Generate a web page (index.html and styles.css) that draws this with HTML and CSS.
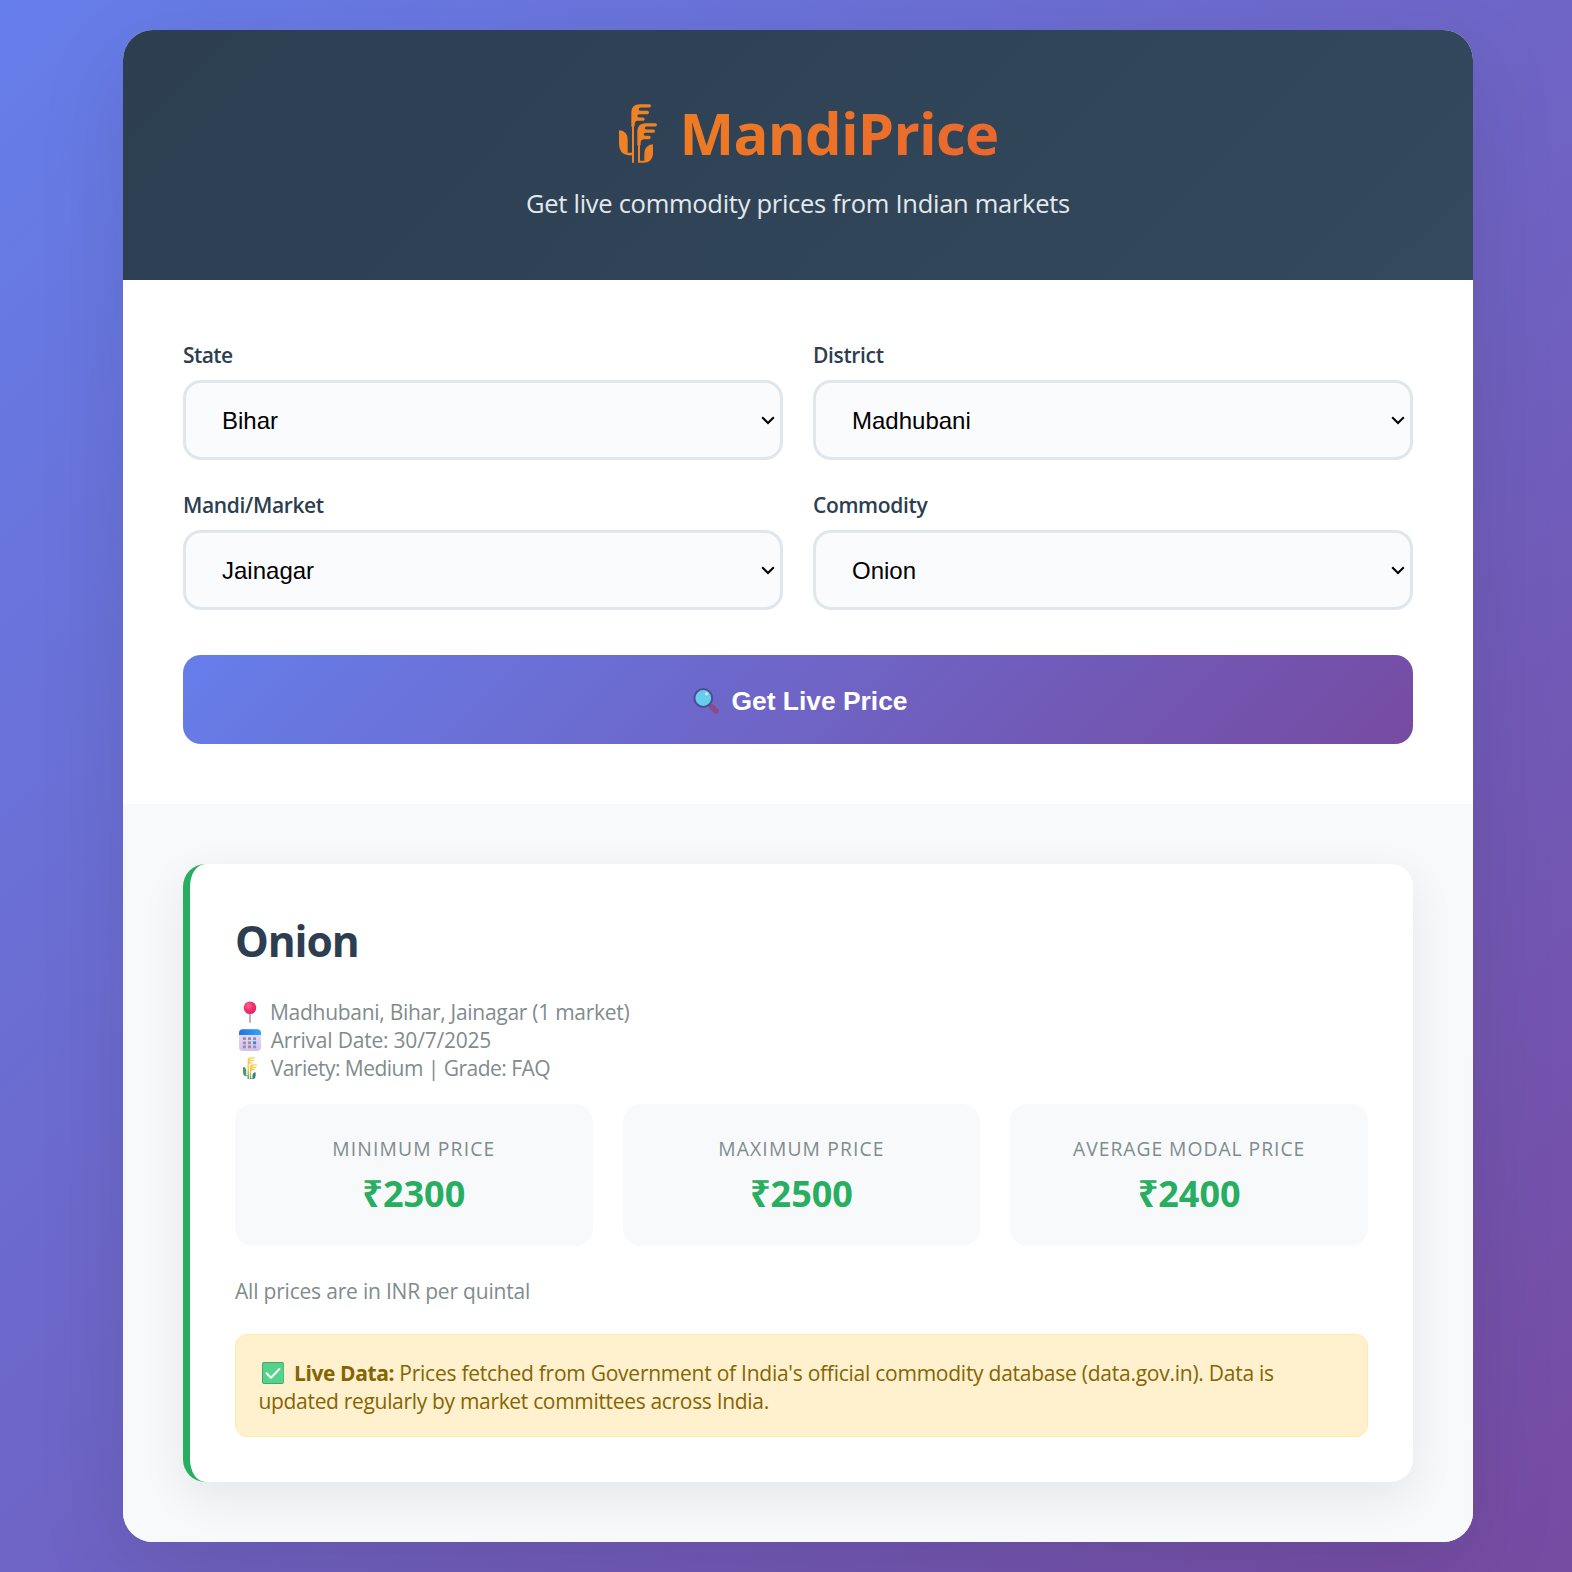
FILE: index.html
```html
<!DOCTYPE html>
<html lang="en">
<head>
<meta charset="utf-8">
<title>MandiPrice</title>
<link rel="stylesheet" href="styles.css">
</head>
<body>
<main class="container">
  <header class="header">
    <h1 class="title">
      <svg class="title-icon" viewBox="57 42 114 176">
        <defs><linearGradient id="orange" gradientUnits="userSpaceOnUse" x1="57" y1="42" x2="171" y2="218"><stop offset="0" stop-color="#f08523"/><stop offset="1" stop-color="#ef7e26"/></linearGradient></defs>
        <g fill="url(#orange)">
          <path d="M94 110V67Q94 42 120 42H148Q153 42 153 47Q153 52 148 52H122Q116 52 116 57Q116 62 122 62H142Q147 62 147 67Q147 72 142 72H118Q112 72 112 77Q112 82 118 82H129Q134 82 134 87Q134 92 129 92H112Q105 93 104 100V108H102V218H96V195H85Q57 193 57 160V120Q83 122 83 148V188H96V110Z"/>
          <path d="M112 165V124Q112 99 138 99H166Q171 99 171 104Q171 109 166 109H140Q134 109 134 114Q134 118 140 118H160Q165 118 165 123Q165 128 160 128H136Q131 128 131 133Q131 137 136 137H147Q152 137 152 142Q152 147 147 147H131Q122 149 122 156V165H120V212H133V190Q134 164 159 162V190Q158 216 133 218H114V165Z"/>
        </g>
      </svg>
      <span>MandiPrice</span>
    </h1>
    <p class="subtitle">Get live commodity prices from Indian markets</p>
  </header>

  <form class="search">
    <div class="fields">
      <div class="field">
        <label class="label label-short" for="state">State</label>
        <div class="select"><select id="state"><option>Bihar</option></select><svg viewBox="0 0 14 9"><path d="M1.2 1.2 7 7 12.8 1.2"/></svg></div>
      </div>
      <div class="field">
        <label class="label" for="district">District</label>
        <div class="select"><select id="district"><option>Madhubani</option></select><svg viewBox="0 0 14 9"><path d="M1.2 1.2 7 7 12.8 1.2"/></svg></div>
      </div>
      <div class="field">
        <label class="label" for="market">Mandi/Market</label>
        <div class="select"><select id="market"><option>Jainagar</option></select><svg viewBox="0 0 14 9"><path d="M1.2 1.2 7 7 12.8 1.2"/></svg></div>
      </div>
      <div class="field">
        <label class="label" for="commodity">Commodity</label>
        <div class="select"><select id="commodity"><option>Onion</option></select><svg viewBox="0 0 14 9"><path d="M1.2 1.2 7 7 12.8 1.2"/></svg></div>
      </div>
    </div>
    <button class="submit" type="button">
      <svg class="lens" viewBox="0 0 26 26">
        <path d="M15.5 15.5 19 19" stroke="#4f4a86" stroke-width="3"/>
        <path d="M19 19 23 23" stroke="#8d4a86" stroke-width="5.6" stroke-linecap="round"/>
        <circle cx="10.3" cy="10" r="8.9" fill="#66cdea" stroke="#4d4d8f" stroke-width="2"/>
        <circle cx="13.7" cy="5.8" r="1.6" fill="#c4ecf8"/>
      </svg>
      <span>Get Live Price</span>
    </button>
  </form>

  <section class="results">
    <article class="card">
      <h2 class="name">Onion</h2>
      <div class="info">
        <div class="row row-place">
          <svg class="icon" viewBox="0 0 24 28">
            <defs><radialGradient id="pin" cx=".38" cy=".35" r=".7"><stop offset="0" stop-color="#ff6a90"/><stop offset=".5" stop-color="#f2336a"/><stop offset="1" stop-color="#d92467"/></radialGradient></defs>
            <path d="M12 14V24.8" stroke="#a795ac" stroke-width="1.5"/><circle cx="12" cy="9.7" r="6.3" fill="url(#pin)"/>
          </svg>
          <span>Madhubani, Bihar, Jainagar (1 market)</span>
        </div>
        <div class="row row-date">
          <svg class="icon" viewBox="0 0 24 28">
            <defs><linearGradient id="sheet" x1="0" y1="0" x2="0" y2="1"><stop offset="0" stop-color="#e9e2f6"/><stop offset="1" stop-color="#d6c0ea"/></linearGradient><linearGradient id="band"><stop offset="0" stop-color="#1b76e0"/><stop offset="1" stop-color="#31a4fb"/></linearGradient></defs>
            <rect x="1" y="3.2" width="22" height="21.8" rx="4" fill="url(#sheet)"/>
            <path d="M1 9V7.2a4 4 0 0 1 4-4H19a4 4 0 0 1 4 4V9Z" fill="url(#band)"/>
            <path d="M4.9 12.7h3M10 12.7h3M15.1 12.7h3M4.9 16.8h3M10 16.8h3M4.9 20.8h3M10 20.8h3M15.1 20.8h3" stroke="#998da8" stroke-width="2.7"/>
            <path d="M15.1 16.8h3" stroke="#1d8df2" stroke-width="2.9"/>
          </svg>
          <span>Arrival Date: 30/7/2025</span>
        </div>
        <div class="row row-variety">
          <svg class="icon" viewBox="0 0 24 28">
            <defs><linearGradient id="stalk" x1="0" y1="0" x2="0" y2="1"><stop offset="0" stop-color="#ffd24a"/><stop offset=".55" stop-color="#f7bd45"/><stop offset=".75" stop-color="#8fb266"/><stop offset="1" stop-color="#3f8a6b"/></linearGradient></defs>
            <g transform="translate(5 3.3) scale(.124) translate(-57 -42)">
              <path fill="#4c9a63" d="M57 120Q83 122 83 148V188H102V195H85Q57 193 57 160Z"/>
              <path fill="#3b8376" d="M159 162Q134 164 133 190V212H114V218H133Q158 216 159 190Z"/>
              <path fill="url(#stalk)" d="M94 110V67Q94 42 120 42H148Q153 42 153 47Q153 52 148 52H122Q116 52 116 57Q116 62 122 62H142Q147 62 147 67Q147 72 142 72H118Q112 72 112 77Q112 82 118 82H129Q134 82 134 87Q134 92 129 92H112Q105 93 104 100V218H94Z"/>
              <path fill="url(#stalk)" d="M112 165V124Q112 99 138 99H166Q171 99 171 104Q171 109 166 109H140Q134 109 134 114Q134 118 140 118H160Q165 118 165 123Q165 128 160 128H136Q131 128 131 133Q131 137 136 137H147Q152 137 152 142Q152 147 147 147H131Q122 149 122 156V218H112Z"/>
            </g>
          </svg>
          <span>Variety: Medium | Grade: FAQ</span>
        </div>
      </div>

      <div class="prices">
        <div class="price"><div class="price-label">Minimum Price</div><div class="price-value">₹2300</div></div>
        <div class="price"><div class="price-label">Maximum Price</div><div class="price-value">₹2500</div></div>
        <div class="price"><div class="price-label price-label-long">Average Modal Price</div><div class="price-value">₹2400</div></div>
      </div>

      <p class="unit">All prices are in INR per quintal</p>

      <div class="notice"><svg class="check" viewBox="0 0 22 22"><rect width="22" height="22" rx="2" fill="#3fa579"/><rect x="1" y="1" width="20.5" height="20" rx="1.5" fill="#55d38a"/><path d="M4.6 11.3 9 15.7 17.4 7" fill="none" stroke="#fff" stroke-width="2" stroke-linecap="round" stroke-linejoin="round"/></svg><strong>Live Data:</strong> Prices fetched from Government of India's official commodity database (data.gov.in). Data is <span class="notice-end">updated regularly by market committees across India.</span></div>
    </article>
  </section>
</main>
</body>
</html>
```
FILE: styles.css
```css
* { box-sizing: border-box; margin: 0; padding: 0; }

body {
  min-height: 1572px;
  padding: 30px 99px 30px 123px;
  background: linear-gradient(135deg, #667eea 0%, #764ba2 100%);
  font-family: "Open Sans", "Noto Sans", sans-serif;
}

.container {
  width: 1350px;
  background: #fff;
  border-radius: 30px;
  overflow: hidden;
  box-shadow: 0 30px 90px rgba(0, 0, 0, .1);
}

.header {
  height: 250px;
  padding: 60px;
  background: linear-gradient(135deg, #2c3e50, #34495e);
  text-align: center;
}

.title {
  display: flex;
  justify-content: center;
  align-items: center;
  height: 85px;
  font-size: 58px;
  font-weight: 700;
  line-height: 87px;
  letter-spacing: -.8px;
  color: transparent;
  background: linear-gradient(135deg, #f39c12, #e74c3c);
  background-clip: text;
  -webkit-background-clip: text;
}
.title-icon { width: 38px; height: 59px; margin: 1px 23px 0 21px; }

.subtitle {
  margin-top: 10px;
  font-size: 25.5px;
  line-height: 36px;
  letter-spacing: -.28px;
  color: #e4e8eb;
}

.search { padding: 60px; }
.fields { display: grid; grid-template-columns: 1fr 1fr; gap: 30px; }
.field { display: flex; flex-direction: column; gap: 10px; }
.label {
  font-size: 21px;
  font-weight: 600;
  line-height: 30px;
  letter-spacing: -.35px;
  color: #2c3e50;
}
.label-short { letter-spacing: -.6px; }

.select { display: grid; align-items: center; height: 80px; }
.select select,
.select svg { grid-area: 1 / 1; }
.select select {
  height: 80px;
  padding: 0 30px 0 36px;
  appearance: none;
  border: 3px solid #dfe6ec;
  border-radius: 18px;
  background: #fafbfd;
  font: 24px "Liberation Sans", Arial, sans-serif;
  color: #000;
}
.select svg {
  justify-self: end;
  width: 14px;
  height: 9px;
  margin-right: 8px;
  fill: none;
  stroke: #000;
  stroke-width: 2;
}

.submit {
  display: flex;
  justify-content: center;
  align-items: center;
  gap: 12px;
  width: 100%;
  height: 89px;
  margin-top: 45px;
  padding: 3px 0 0 1px;
  border: 0;
  border-radius: 18px;
  background: linear-gradient(135deg, #667eea 0%, #764ba2 100%);
  font: 700 26.4px "Liberation Sans", Arial, sans-serif;
  color: #fff;
}
.lens { width: 26px; height: 26px; margin-left: 4px; }

.results { padding: 60px; background: #f8f9fb; }
.card {
  padding: 45px;
  border-left: 7px solid #27ae60;
  border-radius: 22.5px;
  background: #fff;
  box-shadow: 0 15px 45px rgba(0, 0, 0, .08);
}
.name {
  height: 60px;
  font-size: 42.5px;
  font-weight: 700;
  line-height: 63px;
  letter-spacing: -1.1px;
  color: #2c3e50;
}

.info,
.unit { font-size: 21px; line-height: 28px; color: #7f8c8d; }
.info { margin-top: 29px; }
.row { display: flex; height: 28px; }
.icon { width: 24px; height: 28px; margin-left: 3px; }
.row-place { gap: 8px; letter-spacing: -.28px; }
.row-date { gap: 8.7px; letter-spacing: -.21px; }
.row-variety { gap: 8.7px; letter-spacing: -.52px; }

.prices { display: grid; grid-template-columns: repeat(3, 1fr); gap: 30px; margin-top: 22px; }
.price {
  height: 142px;
  padding-top: 31px;
  border-radius: 18px;
  background: #f8f9fb;
  text-align: center;
}
.price-label {
  font-size: 19.3px;
  line-height: 28px;
  letter-spacing: 1.15px;
  text-transform: uppercase;
  color: #7f8c8d;
}
.price-label-long { letter-spacing: .98px; }
.price-value {
  margin-top: 7px;
  font-size: 36px;
  font-weight: 700;
  line-height: 48px;
  color: #27ae60;
}

.unit { margin-top: 31px; letter-spacing: -.2px; }

.notice {
  margin-top: 29px;
  padding: 24px 22.5px 21px;
  border: 1px solid #ffeaa7;
  border-radius: 12px;
  background: #fff1cd;
  font-size: 21px;
  line-height: 28px;
  letter-spacing: -.25px;
  color: #856404;
}
.notice strong { letter-spacing: -.4px; }
.notice-end { letter-spacing: -.32px; }
.check { width: 22px; height: 22px; margin: 0 10px 0 3.5px; vertical-align: -3px; }
```
